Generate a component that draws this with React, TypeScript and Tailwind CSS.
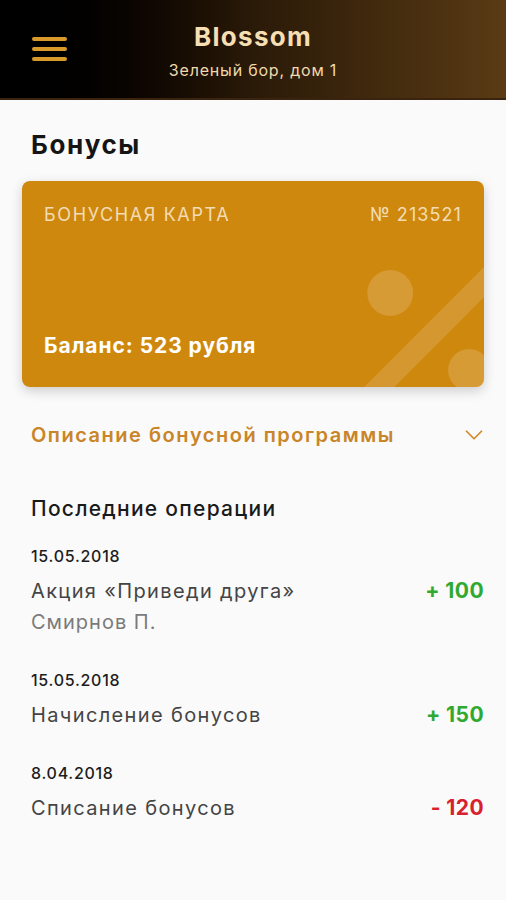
import { ChevronDown } from 'lucide-react';

type Operation = {
  date: string;
  title: string;
  subtitle?: string;
  amount: string;
  positive: boolean;
};

const OPERATIONS: Operation[] = [
  { date: '15.05.2018', title: 'Акция «Приведи друга»', subtitle: 'Смирнов П.', amount: '+ 100', positive: true },
  { date: '15.05.2018', title: 'Начисление бонусов', amount: '+ 150', positive: true },
  { date: '8.04.2018', title: 'Списание бонусов', amount: '- 120', positive: false },
];

const CardPattern = () => (
  <svg className="absolute inset-0 h-full w-full" viewBox="0 0 463 206" preserveAspectRatio="none">
    <circle cx="369" cy="112" r="23" fill="#ffffff" fillOpacity="0.16" />
    <path d="M343 206 L463 86 L463 116 L373 206 Z" fill="#ffffff" fillOpacity="0.14" />
    <circle cx="448" cy="189" r="21" fill="#ffffff" fillOpacity="0.16" />
  </svg>
);

export default function App() {
  return (
    <div className="min-h-[900px] w-full bg-[#fafafa] font-['Inter',sans-serif] tracking-[0.045em]">
      {/* Header */}
      <header className="relative flex h-[100px] items-center border-b-2 border-[#3a2410] bg-gradient-to-r from-[#000000] via-[#2a1a08] to-[#5a3b14] px-8">
        <div className="flex w-[35px] flex-col gap-[6px]">
          <span className="h-[4px] rounded-full bg-[#d99a2b]" />
          <span className="h-[4px] rounded-full bg-[#d99a2b]" />
          <span className="h-[4px] rounded-full bg-[#d99a2b]" />
        </div>
        <div className="absolute inset-x-0 top-[20px] flex flex-col items-center">
          <h1 className="text-[26px] font-bold leading-[34px] tracking-[0.05em] text-[#f6dfb2]">Blossom</h1>
          <p className="mt-[5px] text-[16px] leading-[22px] tracking-[0.05em] text-[#f0d9ac]">Зеленый бор, дом 1</p>
        </div>
      </header>

      <main className="px-[22px]">
        <h2 className="mt-[28px] px-[9px] text-[26px] font-bold leading-[34px] tracking-[0.06em] text-[#151515]">Бонусы</h2>

        {/* Card */}
        <div className="relative mt-[19px] flex h-[206px] flex-col justify-between overflow-hidden rounded-[8px] bg-[#cf880e] px-[22px] pt-[22px] pb-[27px] shadow-[0_4px_12px_rgba(0,0,0,0.18)]">
          <CardPattern />
          <div className="relative flex items-center justify-between text-[18px] leading-[24px] tracking-[0.09em] text-[#f2dcb5]">
            <span>БОНУСНАЯ КАРТА</span>
            <span className="tracking-[0.06em]">№ 213521</span>
          </div>
          <div className="relative text-[21px] font-bold leading-[28px] tracking-[0.045em] text-white">Баланс: 523 рубля</div>
        </div>

        {/* Program description */}
        <button className="mt-[33px] flex w-full items-center justify-between pl-[9px] text-left">
          <span className="text-[20px] font-semibold leading-[28px] tracking-[0.075em] text-[#c98527]">
            Описание бонусной программы
          </span>
          <ChevronDown size={30} strokeWidth={1.4} className="-mr-[5px] text-[#d08a2a]" />
        </button>

        {/* Operations */}
        <section className="mt-[46px] pl-[9px]">
          <h3 className="text-[21px] font-medium leading-[26px] tracking-[0.06em] text-[#1a1a1a]">Последние операции</h3>
          <div className="mt-[24px] flex flex-col gap-[35px]">
            {OPERATIONS.map((op, i) => (
              <div key={i} className="flex flex-col">
                <span className="text-[16px] font-medium leading-[20px] tracking-[0.045em] text-[#1d1d1d]">{op.date}</span>
                <div className="mt-[12px] flex items-start justify-between">
                  <div className="flex flex-col">
                    <span className="text-[20px] leading-[26px] tracking-[0.068em] text-[#444444]">{op.title}</span>
                    {op.subtitle && (
                      <span className="mt-[5px] text-[20px] leading-[26px] tracking-[0.05em] text-[#7a7a7a]">
                        {op.subtitle}
                      </span>
                    )}
                  </div>
                  <span
                    className={`text-[21px] font-bold leading-[26px] tracking-[0.02em] ${
                      op.positive ? 'text-[#2fa92f]' : 'text-[#d8202e]'
                    }`}
                  >
                    {op.amount}
                  </span>
                </div>
              </div>
            ))}
          </div>
        </section>
      </main>
    </div>
  );
}
